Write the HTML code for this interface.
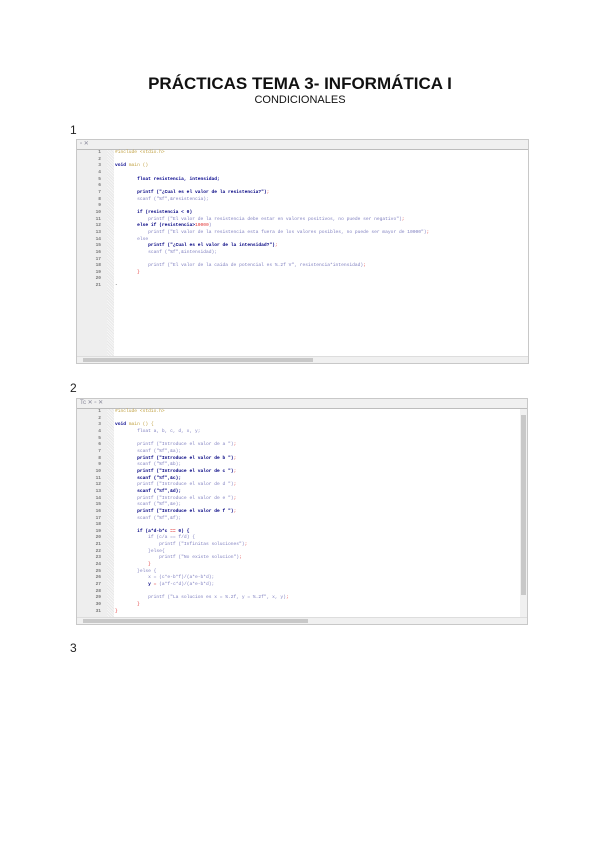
<!DOCTYPE html>
<html><head><meta charset="utf-8"><style>
*{margin:0;padding:0;box-sizing:border-box}
body{width:600px;height:848px;background:#fff;position:relative;font-family:"Liberation Sans",sans-serif;overflow:hidden}
.t{position:absolute;left:0;width:600px;text-align:center;color:#111}
.n{position:absolute;left:70px;font-size:12px;color:#222}
.ed{position:absolute;left:76px;border:1px solid #c8c8c8;background:#fff;overflow:hidden}
.tab{height:10px;background:#f0f0f0;border-bottom:1px solid #bdbdbd;font-size:6px;color:#889;padding-left:3px;line-height:9px}
.gut{position:absolute;left:0;top:10px;bottom:0;width:30px;background:#eee}
.fold{position:absolute;left:30px;top:10px;bottom:0;width:7px;background:repeating-linear-gradient(45deg,#f6f6f6 0 1px,#e8e8e8 1px 2px)}
.ln{position:absolute;left:0;width:24px;text-align:right;font:bold 4.5px "Liberation Mono",monospace;color:#777;line-height:6.65px}
.code{position:absolute;left:38px;font:4.6px "Liberation Mono",monospace;line-height:6.65px;white-space:pre;color:#333}
.k{color:#00008b;font-weight:bold}.s{color:#8080c0}.r{color:#e03030}.g{color:#c0a040}.b{color:#000080;font-weight:bold}
.hs{position:absolute;left:0;right:0;bottom:0;height:7px;background:#f0f0f0;border-top:1px solid #ddd}
.hs i{position:absolute;left:6px;top:1px;width:230px;height:4px;background:#c8c8c8}
</style></head><body>
<div class="t" style="top:74px;font-size:17px;font-weight:bold">PRÁCTICAS TEMA 3- INFORMÁTICA I</div>
<div class="t" style="top:94px;font-size:11px">CONDICIONALES</div>
<div class="n" style="top:123px">1</div>
<div class="n" style="top:381px">2</div>
<div class="n" style="top:641px">3</div>

<div class="ed" style="top:139px;width:453px;height:225px">
<div class="tab">▫ ✕</div>
<div class="gut"></div><div class="fold"></div>
<div class="ln" style="top:10px">1<br>2<br>3<br>4<br>5<br>6<br>7<br>8<br>9<br>10<br>11<br>12<br>13<br>14<br>15<br>16<br>17<br>18<br>19<br>20<br>21</div>
<div class="code" style="top:10px"><span class="g">#include &lt;stdio.h&gt;</span>

<span class="k">void</span> <span class="g">main ()</span>

        <span class="k">float resistencia, intensidad;</span>

        <span class="b">printf ("¿Cual es el valor de la resistencia?")</span><span class="r">;</span>
        <span class="s">scanf ("%f",&amp;resistencia);</span>

        <span class="b">if (resistencia &lt; 0)</span>
            <span class="s">printf ("El valor de la resistencia debe estar en valores positivos, no puede ser negativo")</span><span class="r">;</span>
        <span class="b">else if (resistencia&gt;</span><span class="r">10000</span><span class="s">)</span>
            <span class="s">printf ("El valor de la resistencia esta fuera de los valores posibles, no puede ser mayor de 10000")</span><span class="r">;</span>
        <span class="s">else</span>
            <span class="b">printf ("¿Cual es el valor de la intensidad?")</span><span class="r">;</span>
            <span class="s">scanf ("%f",&amp;intensidad);</span>

            <span class="s">printf ("El valor de la caida de potencial es %.2f V", resistencia*intensidad)</span><span class="r">;</span>
        <span class="r">}</span>

-</div>
<div class="hs"><i></i></div>
</div>

<div class="ed" style="top:398px;width:452px;height:227px">
<div class="tab">Tc ✕ ▫ ✕</div>
<div class="gut"></div><div class="fold"></div>
<div class="ln" style="top:10px">1<br>2<br>3<br>4<br>5<br>6<br>7<br>8<br>9<br>10<br>11<br>12<br>13<br>14<br>15<br>16<br>17<br>18<br>19<br>20<br>21<br>22<br>23<br>24<br>25<br>26<br>27<br>28<br>29<br>30<br>31</div>
<div class="code" style="top:10px"><span class="g">#include &lt;stdio.h&gt;</span>

<span class="k">void</span> <span class="g">main () {</span>
        <span class="s">float a, b, c, d, x, y;</span>

        <span class="s">printf ("Introduce el valor de a ")</span><span class="r">;</span>
        <span class="s">scanf ("%f",&amp;a);</span>
        <span class="b">printf ("Introduce el valor de b ")</span><span class="r">;</span>
        <span class="s">scanf ("%f",&amp;b);</span>
        <span class="b">printf ("Introduce el valor de c ")</span><span class="r">;</span>
        <span class="b">scanf ("%f",&amp;c);</span>
        <span class="s">printf ("Introduce el valor de d ")</span><span class="r">;</span>
        <span class="b">scanf ("%f",&amp;d);</span>
        <span class="s">printf ("Introduce el valor de e ")</span><span class="r">;</span>
        <span class="s">scanf ("%f",&amp;e);</span>
        <span class="b">printf ("Introduce el valor de f ")</span><span class="r">;</span>
        <span class="s">scanf ("%f",&amp;f);</span>

        <span class="b">if (a*d-b*c <span class="r">==</span> 0) {</span>
            <span class="s">if (c/a == f/d) {</span>
                <span class="s">printf ("Infinitas soluciones")</span><span class="r">;</span>
            <span class="s">}else{</span>
                <span class="s">printf ("No existe solucion")</span><span class="r">;</span>
            <span class="r">}</span>
        <span class="s">}else {</span>
            <span class="s">x = (c*e-b*f)/(a*e-b*d);</span>
            <span class="b">y</span> <span class="r">=</span> <span class="s">(a*f-c*d)/(a*e-b*d);</span>

            <span class="s">printf ("La solucion es x = %.2f, y = %.2f", x, y)</span><span class="r">;</span>
        <span class="r">}</span>
<span class="r">}</span></div>
<div style="position:absolute;right:0;top:10px;bottom:7px;width:7px;background:#f0f0f0"><div style="margin:6px 1px;height:180px;background:#c8c8c8"></div></div>
<div class="hs"><i style="width:225px"></i></div>
</div>
</body></html>
